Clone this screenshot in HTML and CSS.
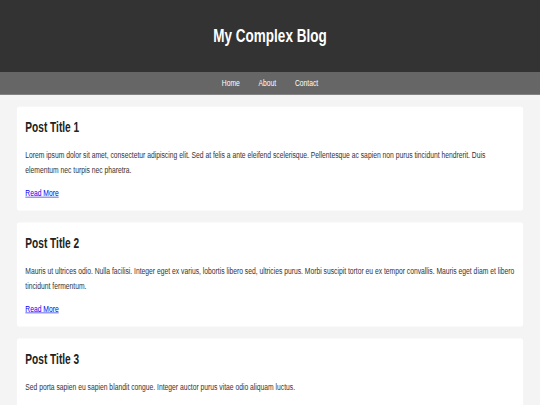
FILE: index.html
```html
<!DOCTYPE html>
<html lang="en">
<head>
    <meta charset="UTF-8">
    <meta name="viewport" content="width=device-width, initial-scale=1.0">
    <title>My Complex Blog</title>
    <link rel="stylesheet" href="styles.css">
</head>
<body>
    <div class="page">
        <header class="site-header">
            <h1>My Complex Blog</h1>
        </header>
        <nav class="site-nav">
            <a href="#">Home</a>
            <a href="#">About</a>
            <a href="#">Contact</a>
        </nav>
        <main class="posts">
            <article class="post">
                <h2>Post Title 1</h2>
                <p>Lorem ipsum dolor sit amet, consectetur adipiscing elit. Sed at felis a ante eleifend scelerisque. Pellentesque ac sapien non purus tincidunt hendrerit. Duis elementum nec turpis nec pharetra.</p>
                <a href="#">Read More</a>
            </article>
            <article class="post">
                <h2>Post Title 2</h2>
                <p>Mauris ut ultrices odio. Nulla facilisi. Integer eget ex varius, lobortis libero sed, ultricies purus. Morbi suscipit tortor eu ex tempor convallis. Mauris eget diam et libero tincidunt fermentum.</p>
                <a href="#">Read More</a>
            </article>
            <article class="post">
                <h2>Post Title 3</h2>
                <p>Sed porta sapien eu sapien blandit congue. Integer auctor purus vitae odio aliquam luctus.</p>
                <a href="#">Read More</a>
            </article>
        </main>
    </div>
</body>
</html>
```

FILE: styles.css
```css
/* Basic reset */
html,
body {
    overflow: hidden;
}

body {
    margin: 0;
    background-color: #f4f4f4;
    font-family: "Liberation Sans", Arial, sans-serif;
    color: #333;
}

.page {
    width: 1280px;
    transform: scale(0.421875, 0.6);
    transform-origin: 0 0;
}

/* Header styling */
.site-header {
    padding: 20px;
    background-color: #333;
    color: #fff;
    text-align: center;
}

/* Navigation styling */
.site-nav {
    padding: 10px;
    background-color: #666;
    text-align: center;
}

.site-nav a {
    margin: 0 20px;
    color: #fff;
    text-decoration: none;
}

/* Posts styling */
.posts {
    max-width: 1200px;
    margin: 20px auto;
}

.post {
    margin-bottom: 20px;
    padding: 20px;
    border-radius: 5px;
    background-color: #fff;
}

.post h2 {
    margin-top: 0;
    color: #222;
}

.post p {
    line-height: 1.6;
}

.post a {
    color: #0000ee;
}
```
